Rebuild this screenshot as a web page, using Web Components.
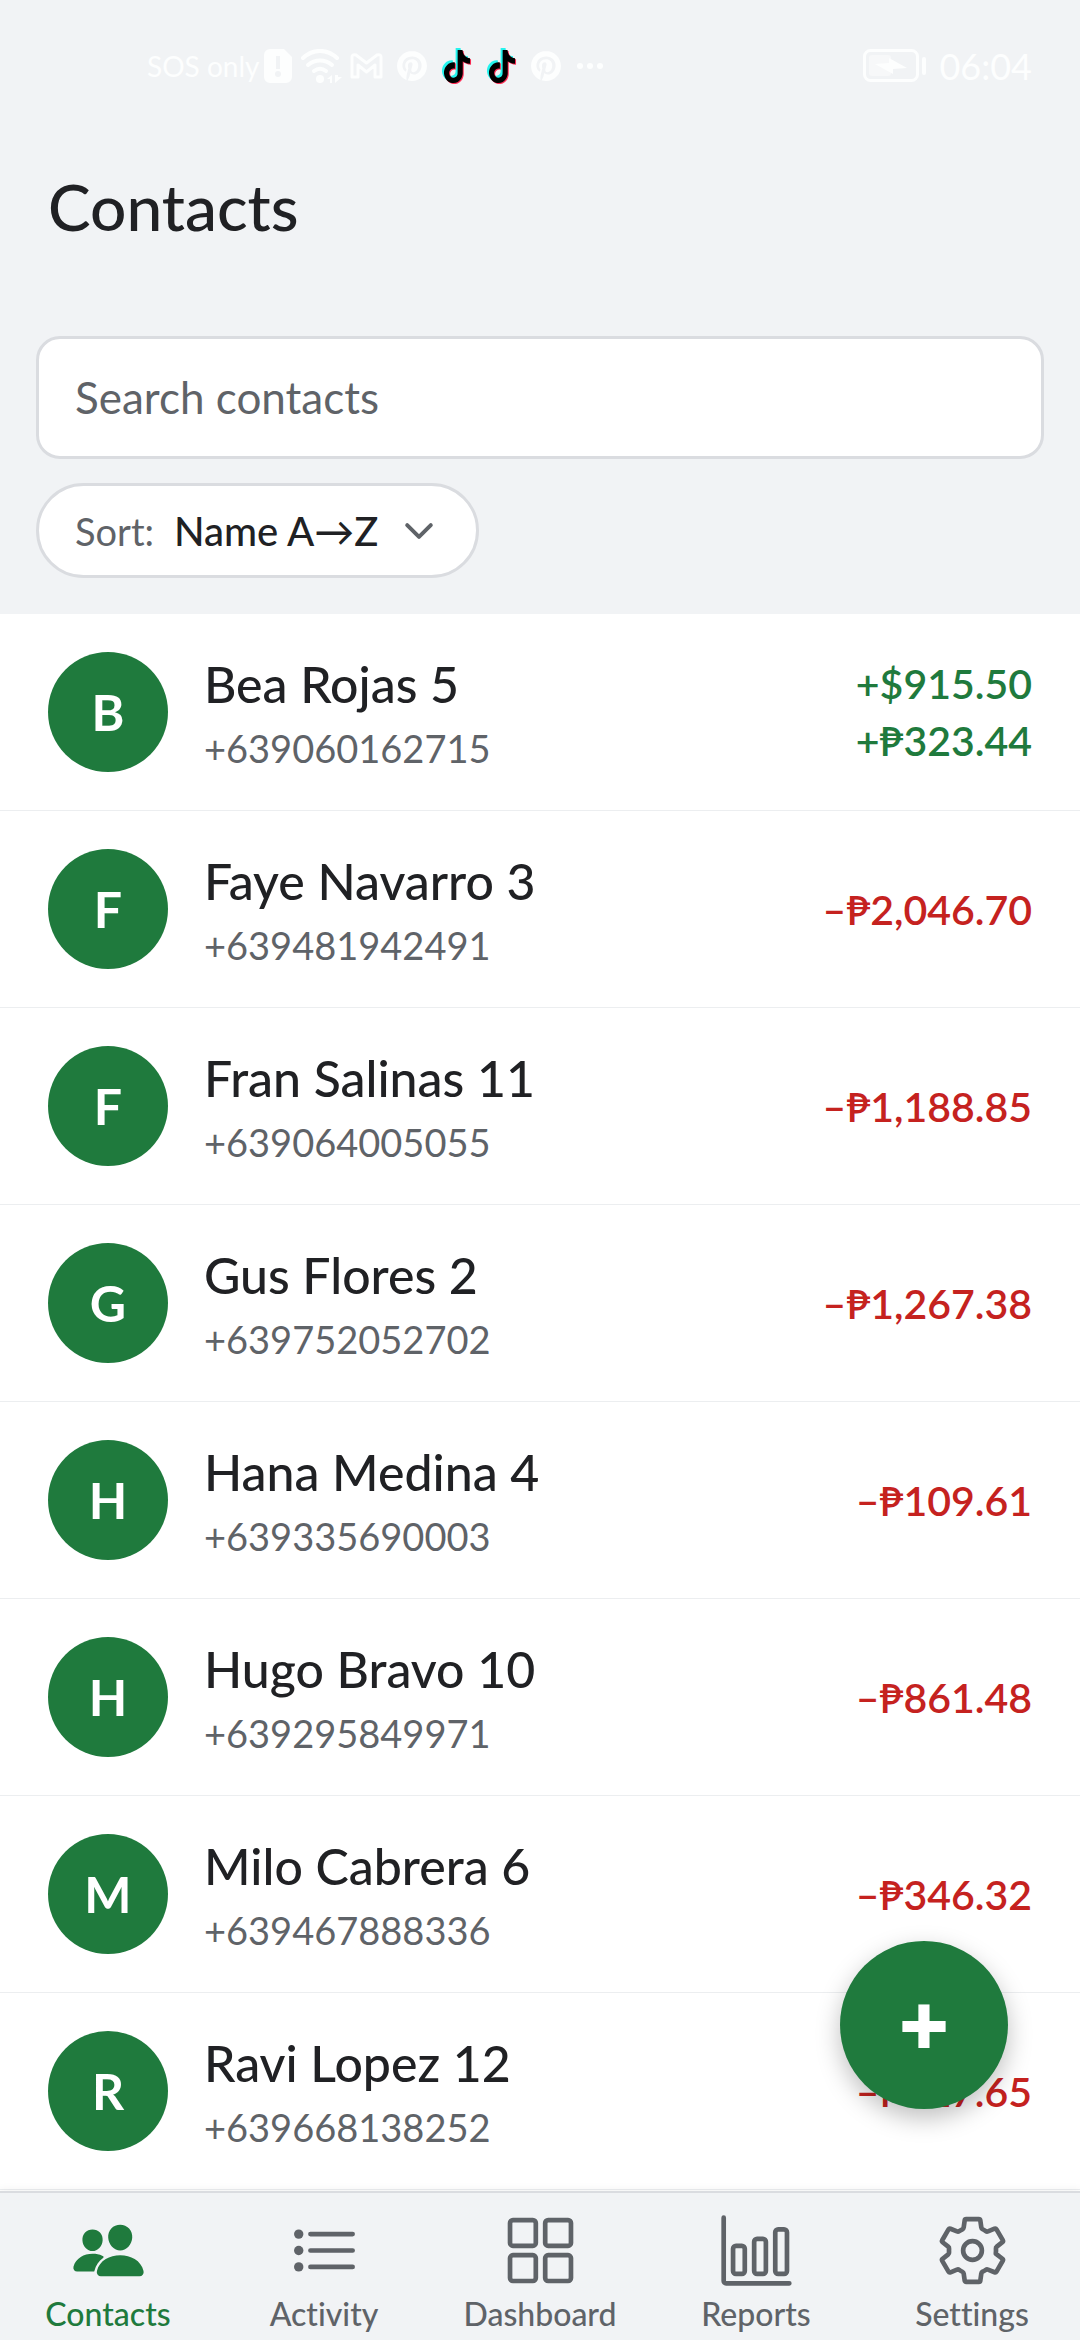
<!DOCTYPE html>
<html lang="en">
<head>
<meta charset="utf-8">
<meta name="viewport" content="width=device-width, initial-scale=1">
<title>Contacts</title>
<style>
  :root {
    --bg: #f1f3f5;
    --surface: #ffffff;
    --line: #dadce0;
    --row-line: #eceef0;
    --text: #202124;
    --muted: #5f6368;
    --green: #1f7a3d;
    --red: #c5221f;
    --gutter: 36px;
  }

  html, body {
    margin: 0;
    min-height: 100%;
  }

  body {
    background: var(--surface);
    color: var(--text);
    font-family: Lato, "Open Sans", sans-serif;
    font-variant-ligatures: none;
  }
</style>
</head>
<body>

<contacts-app></contacts-app>

<template id="status-bar-tpl">
  <style>
    :host {
      display: flex;
      justify-content: space-between;
      align-items: center;
      height: 132px;
      padding: 0 48px 0 147px;
      color: #fdfefe;
    }

    .group {
      display: flex;
      align-items: center;
    }

    .carrier {
      font-size: 28px;
      margin-right: 4px;
    }

    .apps {
      display: flex;
      align-items: center;
      gap: 14px;
      margin-left: 8px;
    }

    .wifi {
      margin-left: 9px;
    }

    .clock {
      font-size: 36px;
      margin-left: 12px;
    }

    svg {
      display: block;
    }
  </style>
  <div class="group">
    <span class="carrier">SOS only</span>
    <svg width="28" height="34" viewBox="0 0 28 34">
      <path fill="currentColor" fill-rule="evenodd" d="M6 0h14l8 8v20a6 6 0 0 1-6 6H6a6 6 0 0 1-6-6V6a6 6 0 0 1 6-6zM12 7h4v13h-4zM14 22a3 3 0 1 0 0 6 3 3 0 0 0 0-6z"/>
    </svg>
    <svg class="wifi" width="41" height="34" viewBox="0 0 41 34">
      <g fill="none" stroke="currentColor" stroke-width="4" stroke-linecap="round">
        <path d="M2 9C12-.5 26-.5 36 9"/>
        <path d="M7 16c7-6 17-6 24 0"/>
        <path d="M13 22c4-3 8-3 12 0"/>
      </g>
      <circle cx="19" cy="30" r="4" fill="currentColor"/>
      <path fill="currentColor" d="M31 26v8h-2v-4h-3zM34 26v8l7-6h-4v-2z"/>
    </svg>
    <div class="apps">
      <svg width="33" height="26" viewBox="0 0 33 26">
        <path fill="none" stroke="currentColor" stroke-width="3" stroke-linejoin="round" d="M2 24V4q0-3 4-2l10.500 8L27 2q4-1 4 2v20h-6V12l-8.500 7L8 12v12z"/>
      </svg>
      <svg width="30" height="30" viewBox="0 0 24 24">
        <path id="pin" fill="currentColor" d="M12.017 0C5.396 0 .029 5.367.029 11.987c0 5.079 3.158 9.417 7.618 11.162-.105-.949-.199-2.403.041-3.439.219-.937 1.406-5.957 1.406-5.957s-.359-.72-.359-1.781c0-1.663.967-2.911 2.168-2.911 1.024 0 1.518.769 1.518 1.688 0 1.029-.653 2.567-.992 3.992-.285 1.193.6 2.165 1.775 2.165 2.128 0 3.768-2.245 3.768-5.487 0-2.861-2.063-4.869-5.008-4.869-3.41 0-5.409 2.562-5.409 5.199 0 1.033.394 2.143.889 2.741.099.12.112.225.085.345-.09.375-.293 1.199-.334 1.363-.053.225-.172.271-.401.165-1.495-.69-2.433-2.878-2.433-4.646 0-3.776 2.748-7.252 7.92-7.252 4.158 0 7.392 2.967 7.392 6.923 0 4.135-2.607 7.462-6.233 7.462-1.214 0-2.354-.629-2.758-1.379l-.749 2.848c-.269 1.045-1.004 2.352-1.498 3.146 1.123.345 2.306.535 3.55.535 6.607 0 11.985-5.365 11.985-11.987C23.97 5.39 18.592.026 11.985.026z"/>
      </svg>
      <svg width="31" height="36" viewBox="0 0 31 36">
        <defs>
          <path id="note" transform="translate(0 1) scale(1.250 1.380)" d="M12.525.02c1.310-.02 2.610-.01 3.910-.02.08 1.530.63 3.090 1.750 4.170 1.120 1.110 2.700 1.620 4.240 1.790v4.030c-1.440-.05-2.890-.35-4.200-.97-.57-.26-1.100-.59-1.620-.93-.01 2.920.01 5.840-.02 8.750-.08 1.400-.54 2.790-1.350 3.940-1.310 1.920-3.580 3.170-5.910 3.210-1.430.08-2.860-.31-4.080-1.030-2.020-1.190-3.440-3.370-3.650-5.710-.02-.5-.03-1-.01-1.490.18-1.900 1.120-3.720 2.580-4.960 1.660-1.440 3.980-2.130 6.150-1.720.02 1.480-.04 2.960-.04 4.440-.99-.32-2.150-.23-3.020.37-.63.41-1.110 1.040-1.360 1.750-.21.51-.15 1.070-.14 1.610.24 1.640 1.820 3.020 3.500 2.870 1.120-.01 2.190-.66 2.770-1.610.19-.33.4-.67.41-1.060.1-1.790.06-3.570.07-5.360.01-4.030-.01-8.050.02-12.070z"/>
        </defs>
        <use href="#note" x="-1" y="-1" fill="#25f4ee"/>
        <use href="#note" x="2" y="2" fill="#fe2c55"/>
        <use href="#note" x="1" y="1" fill="#000"/>
      </svg>
      <svg width="31" height="36" viewBox="0 0 31 36">
        <use href="#note" x="-1" y="-1" fill="#25f4ee"/>
        <use href="#note" x="2" y="2" fill="#fe2c55"/>
        <use href="#note" x="1" y="1" fill="#000"/>
      </svg>
      <svg width="30" height="30" viewBox="0 0 24 24"><use href="#pin"/></svg>
      <svg width="30" height="8" viewBox="0 0 30 8" fill="currentColor">
        <circle cx="5" cy="4" r="3"/><circle cx="15" cy="4" r="3"/><circle cx="25" cy="4" r="3"/>
      </svg>
    </div>
  </div>
  <div class="group">
    <svg width="64" height="34" viewBox="0 0 64 34">
      <rect x="1.500" y="1.500" width="53" height="30" rx="6" fill="none" stroke="currentColor" stroke-width="3"/>
      <rect x="6" y="6" width="22" height="21" rx="3" fill="#f7f8f9"/>
      <path fill="currentColor" d="M12 15l14-1V9l18 10-14 1v5z"/>
      <rect x="59" y="8" width="4" height="18" rx="2" fill="currentColor"/>
    </svg>
    <span class="clock">06:04</span>
  </div>
</template>

<template id="search-field-tpl">
  <style>
    :host {
      display: block;
    }

    input {
      display: block;
      box-sizing: border-box;
      width: 100%;
      padding: 33px 36px;
      border: 3px solid var(--line);
      border-radius: 24px;
      background: var(--surface);
      color: var(--text);
      font: inherit;
      font-size: 44px;
      line-height: 51px;
      outline: none;
    }

    input::placeholder {
      color: var(--muted);
      opacity: 1;
    }
  </style>
  <input type="text" aria-label="Search contacts" placeholder="Search contacts">
</template>

<template id="sort-picker-tpl">
  <style>
    :host {
      display: flex;
    }

    label {
      display: flex;
      align-items: center;
      height: 89px;
      padding: 0 36px;
      border: 3px solid var(--line);
      border-radius: 48px;
      background: var(--surface);
      font-size: 38px;
    }

    .caption {
      color: var(--muted);
      margin-right: 20px;
    }

    select {
      appearance: none;
      padding: 0;
      border: 0;
      background: none;
      color: var(--text);
      font: inherit;
      font-size: 40px;
      font-weight: 500;
      outline: none;
    }

    svg {
      display: block;
      margin-left: 18px;
      color: var(--muted);
    }
  </style>
  <label>
    <span class="caption">Sort:</span>
    <select>
      <option>Name A→Z</option>
      <option>Name Z→A</option>
    </select>
    <svg width="42" height="42" viewBox="0 0 512 512">
      <path fill="none" stroke="currentColor" stroke-width="48" stroke-linecap="round" stroke-linejoin="round" d="M112 184l144 144 144-144"/>
    </svg>
  </label>
</template>

<template id="contact-row-tpl">
  <style>
    :host {
      display: flex;
      align-items: center;
      padding: 34px 48px;
      border-bottom: 1px solid var(--row-line);
    }

    .avatar {
      display: flex;
      align-items: center;
      justify-content: center;
      flex: none;
      width: 120px;
      height: 120px;
      border-radius: 50%;
      background: var(--green);
      color: #fff;
      font-size: 50px;
      font-weight: 700;
    }

    .who {
      flex: 1;
      min-width: 0;
      margin-left: 36px;
    }

    .name {
      font-size: 50px;
      font-weight: 500;
      line-height: 72px;
    }

    .phone {
      color: var(--muted);
      font-size: 38px;
      line-height: 56px;
    }

    .amounts {
      display: flex;
      flex-direction: column;
      align-items: flex-end;
      font-size: 41px;
      font-weight: 600;
      line-height: 57px;
      white-space: nowrap;
    }
  </style>
  <div class="avatar"></div>
  <div class="who">
    <div class="name"></div>
    <div class="phone"></div>
  </div>
  <div class="amounts"><slot></slot></div>
</template>

<template id="money-amount-tpl">
  <style>
    :host {
      display: block;
      color: var(--green);
    }

    :host([owed]) {
      color: var(--red);
    }
  </style>
  <slot></slot>
</template>

<template id="add-button-tpl">
  <style>
    :host {
      position: fixed;
      right: 72px;
      bottom: 231px;
      z-index: 2;
    }

    button {
      display: flex;
      align-items: center;
      justify-content: center;
      width: 168px;
      height: 168px;
      padding: 0;
      border: 0;
      border-radius: 50%;
      background: var(--green);
      color: #fff;
      font: 700 82px/84px "Liberation Sans", sans-serif;
      -webkit-text-stroke: 2px #fff;
      box-shadow: 0 9px 24px rgba(0, 0, 0, .25);
    }
  </style>
  <button type="button" aria-label="Add contact">+</button>
</template>

<template id="tab-link-tpl">
  <style>
    :host {
      display: block;
      flex: 1;
    }

    a {
      display: flex;
      flex-direction: column;
      align-items: center;
      gap: 8px;
      color: var(--muted);
      font-size: 32px;
      font-weight: 500;
      line-height: 36px;
      text-decoration: none;
    }

    :host([active]) a {
      color: var(--green);
    }

    svg {
      display: block;
    }
  </style>
  <a href="#">
    <svg width="75" height="75" viewBox="0 0 512 512"></svg>
    <span><slot></slot></span>
  </a>
</template>

<template id="tab-bar-tpl">
  <style>
    :host {
      display: block;
      position: sticky;
      bottom: 0;
      z-index: 1;
      border-top: 2px solid var(--line);
      background: var(--bg);
      box-shadow: 0 -2px 8px rgba(0, 0, 0, .05);
    }

    nav {
      display: flex;
      padding: 20px 0 8px;
    }
  </style>
  <nav><slot></slot></nav>
</template>

<template id="contacts-app-tpl">
  <style>
    :host {
      display: flex;
      flex-direction: column;
      min-height: 100vh;
    }

    header {
      background: var(--bg);
    }

    h1 {
      margin: 0;
      padding: 36px 48px 90px;
      font-size: 64px;
      font-weight: 500;
      line-height: 78px;
    }

    .tools {
      display: flex;
      flex-direction: column;
      gap: 24px;
      padding: 0 var(--gutter) var(--gutter);
    }

    main {
      flex: 1;
    }
  </style>
  <header>
    <status-bar></status-bar>
    <h1>Contacts</h1>
    <div class="tools">
      <search-field></search-field>
      <sort-picker></sort-picker>
    </div>
  </header>
  <main>
    <contact-row name="Bea Rojas 5" phone="+639060162715">
      <money-amount>+$915.50</money-amount>
      <money-amount>+₱323.44</money-amount>
    </contact-row>
    <contact-row name="Faye Navarro 3" phone="+639481942491">
      <money-amount owed>–₱2,046.70</money-amount>
    </contact-row>
    <contact-row name="Fran Salinas 11" phone="+639064005055">
      <money-amount owed>–₱1,188.85</money-amount>
    </contact-row>
    <contact-row name="Gus Flores 2" phone="+639752052702">
      <money-amount owed>–₱1,267.38</money-amount>
    </contact-row>
    <contact-row name="Hana Medina 4" phone="+639335690003">
      <money-amount owed>–₱109.61</money-amount>
    </contact-row>
    <contact-row name="Hugo Bravo 10" phone="+639295849971">
      <money-amount owed>–₱861.48</money-amount>
    </contact-row>
    <contact-row name="Milo Cabrera 6" phone="+639467888336">
      <money-amount owed>–₱346.32</money-amount>
    </contact-row>
    <contact-row name="Ravi Lopez 12" phone="+639668138252">
      <money-amount owed>–₱327.65</money-amount>
    </contact-row>
  </main>
  <add-button></add-button>
  <tab-bar>
    <tab-link icon="people" active>Contacts</tab-link>
    <tab-link icon="list">Activity</tab-link>
    <tab-link icon="grid">Dashboard</tab-link>
    <tab-link icon="chart">Reports</tab-link>
    <tab-link icon="gear">Settings</tab-link>
  </tab-bar>
</template>

<script>
  const OUTLINE = 'fill="none" stroke="currentColor" stroke-width="32" stroke-linecap="round" stroke-linejoin="round"';

  const ICONS = {
    people: `<path fill="currentColor" d="M336 256c-20.560 0-40.440-9.180-56-25.840-15.130-16.250-24.370-37.920-26-61-1.740-24.620 5.770-47.260 21.140-63.760S312 80 336 80c23.830 0 45.380 9.060 60.700 25.520 15.470 16.620 23 39.220 21.260 63.630-1.670 23.110-10.900 44.770-26 61C376.440 246.820 356.570 256 336 256zM467.830 432H204.180a27.710 27.710 0 01-22-10.670 30.220 30.220 0 01-5.260-25.790c8.420-33.810 29.280-61.850 60.320-81.080C264.790 297.400 299.860 288 336 288c36.850 0 71 9 98.710 26.050 31.110 19.130 52 47.330 60.380 81.550a30.270 30.270 0 01-5.320 25.780A27.680 27.680 0 01467.830 432zM147 260c-35.190 0-66.130-32.720-69-72.930-1.420-20.600 5-39.650 18-53.620 12.860-13.830 31-21.450 51-21.450s38 7.660 50.930 21.570c13.100 14.080 19.500 33.090 18 53.520-2.870 40.200-33.800 72.910-68.930 72.910zM212.660 291.450c-17.590-8.600-40.420-12.900-65.650-12.900-29.460 0-58.070 7.680-80.570 21.620-25.510 15.830-42.670 38.880-49.600 66.710a27.390 27.390 0 004.790 23.360A25.320 25.320 0 0041.720 400h111a8 8 0 007.870-6.570c.11-.63.25-1.260.41-1.880 8.480-34.060 28.350-62.840 57.710-83.820a8 8 0 00-.63-13.390c-1.570-.92-3.370-1.890-5.420-2.890z"/>`,
    list: `<path ${OUTLINE} d="M160 144h288M160 256h288M160 368h288"/>
      <g fill="currentColor"><circle cx="80" cy="144" r="32"/><circle cx="80" cy="256" r="32"/><circle cx="80" cy="368" r="32"/></g>`,
    grid: `<g ${OUTLINE}>
      <rect x="48" y="48" width="176" height="176" rx="20"/><rect x="288" y="48" width="176" height="176" rx="20"/>
      <rect x="48" y="288" width="176" height="176" rx="20"/><rect x="288" y="288" width="176" height="176" rx="20"/></g>`,
    chart: `<g ${OUTLINE}><path d="M32 32v432a16 16 0 0016 16h432"/>
      <rect x="96" y="224" width="80" height="192" rx="20"/><rect x="240" y="176" width="80" height="240" rx="20"/>
      <rect x="384" y="112" width="80" height="304" rx="20"/></g>`,
    gear: `<g ${OUTLINE}><circle cx="256" cy="256" r="64"/>
      <path d="M416.390 256a154.340 154.340 0 01-1.530 20.790l45.210 35.460a10.810 10.810 0 012.450 13.750l-42.770 74a10.810 10.810 0 01-13.140 4.590l-44.900-18.080a16.110 16.110 0 00-15.170 1.750A164.480 164.480 0 01325 400.800a15.940 15.940 0 00-8.820 12.140l-6.730 47.890a11.080 11.080 0 01-10.680 9.170h-85.540a11.110 11.110 0 01-10.690-8.870l-6.720-47.820a16.070 16.070 0 00-9-12.220 155.300 155.300 0 01-21.460-12.570 16 16 0 00-15.110-1.710l-44.890 18.070a10.810 10.810 0 01-13.140-4.580l-42.770-74a10.800 10.800 0 012.450-13.750l38.210-30a16.050 16.050 0 006-14.080c-.36-4.170-.58-8.330-.58-12.500s.21-8.270.58-12.350a16 16 0 00-6.070-13.940l-38.190-30A10.810 10.810 0 0149.480 186l42.770-74a10.810 10.810 0 0113.140-4.590l44.900 18.080a16.110 16.110 0 0015.170-1.750A164.480 164.480 0 01187 111.200a15.940 15.940 0 008.820-12.140l6.730-47.890A11.080 11.080 0 01213.230 42h85.540a11.110 11.110 0 0110.690 8.870l6.720 47.820a16.070 16.070 0 009 12.220 155.300 155.300 0 0121.460 12.570 16 16 0 0015.110 1.710l44.890-18.070a10.810 10.810 0 0113.140 4.580l42.770 74a10.800 10.800 0 01-2.450 13.750l-38.210 30a16.050 16.050 0 00-6.050 14.080c.33 4.140.55 8.300.55 12.470z"/></g>`
  };

  class TemplateElement extends HTMLElement {
    constructor() {
      super();
      const template = document.querySelector(`#${this.localName}-tpl`);
      this.attachShadow({ mode: 'open' });
      this.shadowRoot.appendChild(document.importNode(template.content, true));
    }
  }

  class ContactRow extends TemplateElement {
    connectedCallback() {
      const name = this.getAttribute('name') || '';
      this.shadowRoot.querySelector('.avatar').textContent = name.charAt(0);
      this.shadowRoot.querySelector('.name').textContent = name;
      this.shadowRoot.querySelector('.phone').textContent = this.getAttribute('phone');
    }
  }

  class TabLink extends TemplateElement {
    connectedCallback() {
      this.shadowRoot.querySelector('svg').innerHTML = ICONS[this.getAttribute('icon')] || '';
      if (this.hasAttribute('active')) {
        this.shadowRoot.querySelector('a').setAttribute('aria-current', 'page');
      }
    }
  }

  customElements.define('status-bar', class extends TemplateElement {});
  customElements.define('search-field', class extends TemplateElement {});
  customElements.define('sort-picker', class extends TemplateElement {});
  customElements.define('money-amount', class extends TemplateElement {});
  customElements.define('contact-row', ContactRow);
  customElements.define('add-button', class extends TemplateElement {});
  customElements.define('tab-link', TabLink);
  customElements.define('tab-bar', class extends TemplateElement {});
  customElements.define('contacts-app', class extends TemplateElement {});
</script>
</body>
</html>
